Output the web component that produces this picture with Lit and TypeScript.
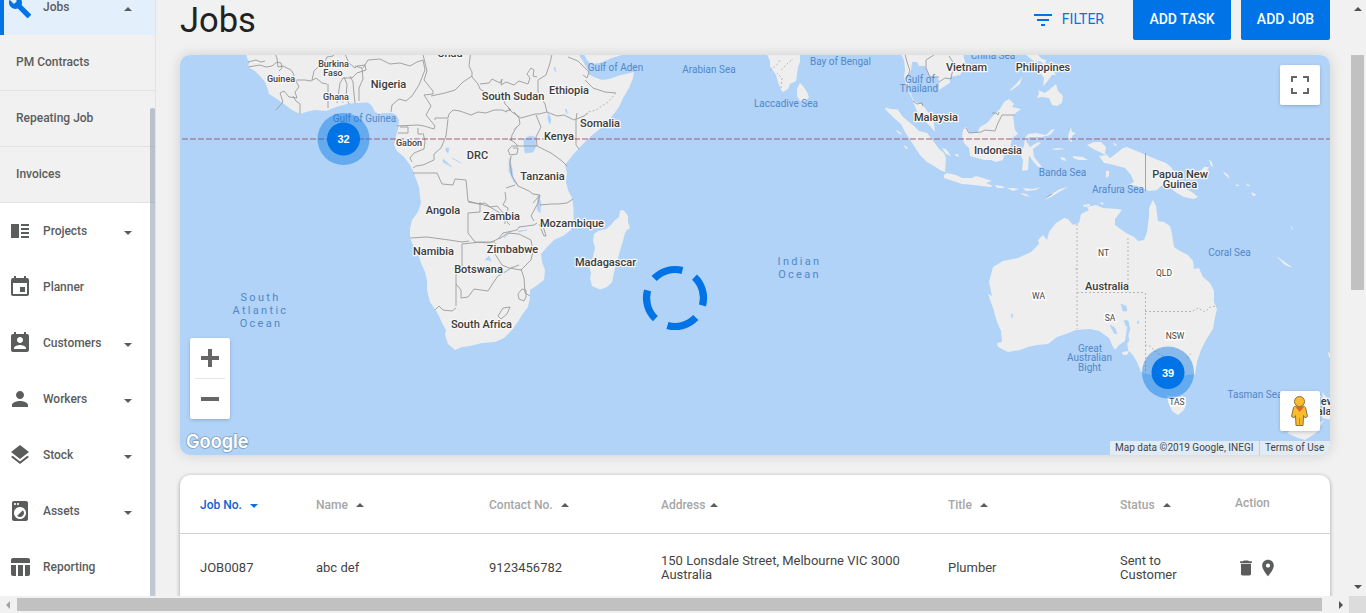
import { LitElement, html, svg, css } from "lit";
import { customElement } from "lit/decorators.js";

const ICONS: Record<string, string> = {
  jobs: "M22.7 19l-9.1-9.1c.9-2.3.4-5-1.5-6.9-2-2-5-2.4-7.4-1.3L9 6 6 9 1.6 4.7C.4 7.1.9 10.1 2.9 12.1c1.9 1.9 4.6 2.4 6.9 1.5l9.1 9.1c.4.4 1 .4 1.4 0l2.3-2.3c.5-.4.5-1.1.1-1.4z",
  projects: "M3 5h8v14H3zM13 5h8v2h-8zM13 9h8v2h-8zM13 13h8v2h-8zM13 17h8v2h-8z",
  planner: "M17 12h-5v5h5v-5zM16 1v2H8V1H6v2H5c-1.11 0-1.99.9-1.99 2L3 19c0 1.1.89 2 2 2h14c1.1 0 2-.9 2-2V5c0-1.1-.9-2-2-2h-1V1h-2zm3 18H5V8h14v11z",
  customers: "M19 3h-1V1h-2v2H8V1H6v2H5c-1.11 0-2 .9-2 2v14c0 1.1.89 2 2 2h14c1.1 0 2-.9 2-2V5c0-1.1-.9-2-2-2zm-7 3c1.66 0 3 1.34 3 3s-1.34 3-3 3-3-1.34-3-3 1.34-3 3-3zm6 12H6v-1c0-2 4-3.1 6-3.1s6 1.1 6 3.1v1z",
  workers: "M12 12c2.21 0 4-1.79 4-4s-1.79-4-4-4-4 1.79-4 4 1.79 4 4 4zm0 2c-2.67 0-8 1.34-8 4v2h16v-2c0-2.66-5.33-4-8-4z",
  stock: "M11.99 18.54l-7.37-5.73L3 14.07l9 7 9-7-1.63-1.27-7.38 5.74zM12 16l7.36-5.73L21 9l-9-7-9 7 1.63 1.27L12 16z",
  assets: "M9.17 16.83c1.56 1.56 4.1 1.56 5.66 0 1.56-1.56 1.56-4.1 0-5.66l-5.66 5.66zM18 2.01L6 2c-1.11 0-2 .89-2 2v16c0 1.11.89 2 2 2h12c1.11 0 2-.89 2-2V4c0-1.11-.89-1.99-2-1.99zM10 4c.55 0 1 .45 1 1s-.45 1-1 1-1-.45-1-1 .45-1 1-1zM7 4c.55 0 1 .45 1 1s-.45 1-1 1-1-.45-1-1 .45-1 1-1zm5 16c-3.31 0-6-2.69-6-6s2.69-6 6-6 6 2.69 6 6-2.69 6-6 6z",
  reporting: "M10 10.02h5V21h-5zM17 21h3c1.1 0 2-.9 2-2v-9h-5v11zm3-18H5c-1.1 0-2 .9-2 2v3h19V5c0-1.1-.9-2-2-2zM3 19c0 1.1.9 2 2 2h3V10H3v9z",
  filter: "M10 18h4v-2h-4v2zM3 6v2h18V6H3zm3 7h12v-2H6v2z",
  trash: "M6 19c0 1.1.9 2 2 2h8c1.100 0 2-.9 2-2V7H6v12zM19 4h-3.500l-1-1h-5l-1 1H5v2h14V4z",
  place: "M12 2C8.130 2 5 5.130 5 9c0 5.250 7 13 7 13s7-7.750 7-13c0-3.870-3.130-7-7-7zm0 9.500c-1.380 0-2.500-1.120-2.500-2.500s1.120-2.500 2.500-2.500 2.500 1.120 2.500 2.500-1.120 2.500-2.500 2.500z",
};

const icon = (name: string, cls = "icon") =>
  html`<svg class=${cls} viewBox="0 0 24 24"><path d=${ICONS[name]}></path></svg>`;

/* Land outlines, in the coordinate space of the map view box. */
const LAND: string[] = [
  // Africa
  "M246 50L247 58 249 62 248 67 255 71 260 76 265 82 268 90 269 94 277 99 284 104 292 110 300 114 306 112 315 110 326 111 336 107 347 104 355 103 368 102.500 372 106 375 112 379 114 384 113 392 113 396 115 399 120 398 129 396 136 394 145 397 151 404 157 410 165 414 173 416 179 419 187 420 196 421 203 418 212 412 220 410 229 410 238 415 250 419 256 421 263 425 272 427 281 427 290 430 302 434 308 438 314 443 325 446 330 445 335 448 344 455 350 462 347 470 346 482 343 495 342 504 338 512 330 517 323 524 312 528 307 530 298 530 290 536 286 544 280 545 270 542 262 541 254 548 246 554 240 563 236 571 230 573.500 222 573.500 208 572 198 568 190 566 182 567 173 565 165 572 156 579 148 590 137 601 128 613 115 619 107 623 98 629 88 633 78 634 72 626 74 621 75 609 79 602 80 594 77 588 74 588 70 584 63 576 50Z",
  "M582 50L587 60 591 64 600 63 612 58 622 55 627 50Z",
  "M623 210L626 213 628 216 628 222 630 228 627 230 625 233 623 241 621 247 618 258 615 268 612 282 607 287 600 289.500 592 286 590 278 591 273 589 266 593 257 595 248 593 241 594 234 598 231 606 229 611 225 614 221 619 217 620 211Z",
  // India, Sri Lanka
  "M765 50L770 61 770 66 776 75 778 82 781 90 783 92 788 89 790 84 796 81 797 75 798 67 800 62 800 50Z",
  "M800 83L803 86 807 92 809 97 806 101 800 101 797 96 797 89Z",
  // Indochina and the Malay peninsula
  "M899 50L904 60 905 70 904 77 906 85 908 91 912 98 914 104 917 111 921 117 930 126 935 132 934 123 931 116 925 108 921 104 914 101 911 94 907 88 909 84 907 78 911 71 912 62 917 62 919 66 925 66 930 76 937 77 939 80 939 90 945 86 950 83 950 77 960 75 965 68 965 62 962 50Z",
  // Sumatra, Java
  "M885 107.500L891 109 898 109.500 902 116 909 122 914 126 919 131 927 133 930 137 934 142 939 149 944 153 946 158 945 172 940 170 934 166 927 162 920 155 914 146 909 138 905 132 901 124 894 118 886 110Z",
  "M944 175L947 173 956 175 962 178 972 178 976 176 983 178 992 181 986 183 993 186 990 187 974 185 962 184 953 181 944 178Z",
  "M995 185l7 1 3 2-8 0zM1007 188l6 0 6 1-6 2zM1020 193l6 1 4 3-7-2zM1023 188l9 1 6-1 4-2-6 4-10 1zM1045 200l5-5 10-6 8-2-9 5-8 5-6 3z",
  "M896 130l4 2 2 3-4-2zM904 145l3 2 1 2-3-1zM942 148l4 1 3 4 2 3-5-2zM955 154l3 0 1 3-3-1z",
  // Borneo, Sulawesi
  "M963 130L966 127 970 133 977 133 980 127 987 123 992 117 1000 109 1004 102 1009 99 1014 104 1012 107 1021 109 1013 115 1014 123 1015 130 1018 134 1012 138 1010 149 1004 155 1003 160 996 162 991 160 984 160 970 156 969 148 964 143 962 136Z",
  "M1024 146L1025 138 1028 134 1036 133 1046 135 1051 130 1055 129 1050 135 1042 137 1029 137 1026 141 1030 147 1038 142 1041 143 1033 149 1034 157 1042 167 1038 167 1032 160 1029 155 1028 170 1022 171 1023 160 1020 154Z",
  // Philippines
  "M1020 84L1012 90 1009 91 1018 82 1022 77Z",
  "M1026 55l12 0 4 4 4 1-1 5-5-4-5 1-4-3zM1040 66l5 3 8 1 3 5-4 0-6 8-3 3 1-8-4-5zM1038 90l7 3 4-3 7-6 2 7 5 5-1 7-5 3-5-1-3-7-7-1-5 1 2-5z",
  // Moluccas
  "M1068 136l3-9 1 5 4 1-4 3 0 6-2-1zM1051 149l8-1 6 1-9 1zM1073 156l10 1 5 3-9 0-6-2zM1060 157l5 1 1 3-4-1zM1106 171l3 0 0 5-3 2zM1113 142l4 3-2 1z",
  // New Guinea and the islands to its east
  "M1087 145L1094 142 1101 142 1106 147 1105 153 1110 158 1113 156 1118 152 1123 148 1127 147 1134 150 1144 154 1158 160 1166 163 1172 168 1174 174 1178 180 1184 188 1192 192 1198 197 1194 199 1184 197 1175 192 1169 186 1162 185 1157 190 1149 191 1137 186 1128 185 1134 182 1131 175 1125 168 1110 164 1104 163 1099 156 1106 155 1093 149Z",
  "M1190 176l9-3 5-6 5 0-3 6-10 6-6 1zM1208 159l4 3 1 5-2-1-1-4zM1223 171l5 4 2 4-5-4zM1236 184l4 2-4 0zM1245 183l6 3-3 0zM1251 192l6 3-4 1zM1257 187l4 5zM1262 198l3 3zM1291 225l2 5-2-2zM1295 231l2 3zM1276 256l6 4 11 8-8-3z",
  // Australia
  "M1153 200L1156 206 1157 214 1158 221 1164 222 1170 226 1172 234 1174 247 1180 251 1188 255 1193 261 1194 269 1199 268 1203 277 1210 283 1214 291 1214 302 1217 309 1215 317 1213 329 1206 340 1201 350 1197 362 1195 374 1187 375 1180 377 1172 376 1164 376 1158 378 1151 375 1141 372 1137 362 1133 355 1128 350 1127 341 1129 331 1125 341 1119 345 1115 350 1112 345 1109 338 1099 331 1090 329 1076 330 1066 334 1057 337 1048 344 1037 345 1028 347 1020 350 1008 352 998 347 997 343 1002 342 1001 331 997 322 993 308 988 294 992 296 989 282 993 267 1003 261 1018 258 1031 252 1039 244 1038 240 1043 235 1047 240 1049 232 1056 223 1064 218 1068 219 1073 225 1079 223 1081 214 1089 210 1087 207 1096 205 1103 208 1118 209 1122 210 1115 219 1115 225 1126 233 1134 237 1138 241 1144 240 1147 232 1149 216 1149 208Z",
  "M1083 205l7-1 0 2-6 1zM1100 202l4 1-2 2zM1122 352l7-1-2 4-4 0z",
  // Tasmania, New Zealand
  "M1167 395L1173 398 1186 397 1186 405 1184 410 1178 415 1172 411 1168 402Z",
  "M1322 392L1328 399 1332 405 1332 420 1322 418 1324 408ZM1287 433L1294 428 1312 426 1324 420 1316 433 1305 440 1298 438Z",
  "M1328 352l3 2 0 4-2-1z",
];

const BORDERS: string[] = [
  // West Africa
  "M248 62l8-2 5 2 4-1M248 67l12-2 6 2 6-1 5-4 4 1 1 5-3 3",
  "M273 50l4 8 1 9 5-1 8 4 2 3 4 10 2 4-4 5 2 6-8-1-5-6-4 2 3 9-7 8M293 96l3 5 4 3 0 10M297 80l8 0 6 1 5-3 6 5 5 1",
  "M312 80l2-9 7-7 4-2 2-5 6-1 4-4 8 2 4 9 6 5 2-2 8-1 1 5-9 3-5 5-5 0-4 0-3 5-3 20M328 84l0 14 0 10M344 77l3 7-1 13 3 7M350 76l3 6 1 12 1 9M359 101l0-13 4-9-1-11-7-2M363 68l5-8 12-1 10 5 10-1 10 3 7-4 6-2",
  // Nigeria, Cameroon, Chad
  "M423 60l2 10-6 15-7 11-6 5-7-2-7 6-1 7M422 50l3 13 2 8-3 9 9 11 0 3-9 1 4 6 3 5-5 9 9 11-1 3-10-3-6-1-21 1M400 127l8 0 0 6-10 0M418 128l0 6 4 0",
  "M471 50l-1 8-1 8 3 6 0 5 6 7 2 5 8 5 4 5M431 96l14-3 10-3 8-8 9-6M435 120l0-2 13 0 1-4 4-4 7 1 11 4 7-3 8 1 8-3 8 0 5 2",
  "M480 84l9-1 3-4 8 4 2-4M502 79l-1 6 5-3 8 3 5-4 9 3 2-6-3-4 4-6 3 2-1 6 4 1M506 111l5-1-6-6-2-7-5-5",
  // Horn of Africa and the great lakes
  "M553 50l-3 13-4 12-8 5 0 12 7 12 2 8-8 2-4 0-14 4-9-6-4-4M547 112l10 4 7-1 10 5 10-4 4-3M577 113l-1 7 0 25 3 4M568 57l10 4 7 7 4 4-2 6-4-3M585 80l8 8 12 4 11 1",
  "M536 115l5 12-5 10 1 8 0 1 14 7 11 8 5 5M514 112l5 6 1 6-4 4-4 7-1 6M511 146l26 0M511 147l-3 3 2 5 7-1 1-6-5 0M511 156l-1 8 2 12 6 10 11 5M509 139l5 3 4 4",
  "M448 119l-2 17-5 12-7 6 0 6-11 5-7 1-3 2M423 133l2 8-1 8-10 4-4 5 2 4M413 173l24 0 5 11 11 1 2-6 11 1 2 21 11 3 6-1 5 4 7-1 9 10 5 2",
  "M529 191l4 3 7 1-2 8-7 13 3 5M506 188l9-3M505 192l1 7-3 6 5 3-1 8 0 6 3 3M540 195l-7 8M540 205l11-1 7 0 9-1 6-4",
  // Southern Africa
  "M410 238l17-1 22 3 13 2 7-1M480 202l0 10-12 1 0 20 7 9 14 1 9-4 5-6 14-3 2-3 15-2 3-2M462 244l19-2 14 0M462 244l0 22-6 0 0 40M435 310l4-4 4 4 9 1 4-3M456 284l5 6 0 8 7-1 6-8 14 2 5-8 5-7 7-4 6-4 8-3",
  "M496 243l-2 4 1 7 7 11 7 3 12 2 4-4 6-6 2-9-2-11-12-6-11-1-9 6M521 269l3 9 1 15 5 3M522 289l-4 5 1 5 5 2 2-4 0-7zM503 308l7-1-3 7-6 5-3-3zM468 202l12 2 8 2 7 4 10 6 0 8M539 224l5 12 2 0-3-10",
  // Asia
  "M904 50l3 12 3 9-4 8M926 68l0-8 8-5M926 68l4 9 9 0M939 82l6-4 6 1 1-6 4-6-7-11M913 101l4 3 5-1 1 3M966 128l3 5 12-1 4-2 10 1 3-8 4-8 12 0M992 113l4 0 2 2 1-3M1047 197l5-3",
];
const DASHES: string[] = [
  "M1077 224L1077 329M1128 238L1128 292M1077 292.500L1145 292.500M1145.500 293L1145.500 373M1145 311.500L1192 311.500 1198 308 1205 312 1210 307 1217 306",
  "M1145 345l5 1 7 7 10 5M1187 358l5-6M616 93l-8 9-12 8-8 2M770 70l6-4 4-6M781 88l1-10-5-5M781 70l7-7 5-4M1047 197l7-4",
];
const LAKES: string[] = [
  "M524 139l6-3 5 1 1 9-3 6-8 1-1-8zM509 158l3 10 1 10 5 7-4-3-5-11zM515 128l4-3-6 5zM446 148l3 0-1 5-2-2zM538 195l3 8-1 10-3-4zM505 236l6-4-7 6zM518 231l9-1-8 2zM548 113l3 6-1 5-2-4zM485 260l4-4 2 5-3-1zM443 159l9 8-9-5zM567 110l0 4-2-5zM452 158l9 5zM555 67l1 5-2-3zM341 98l3 2-1 3-2-3z",
  "M1121 304l5 2 1 5-4 0zM1124 320l4 1 0 5-2 0zM1110 325l5 3 2 6-3-1zM1128 321l2 8-2 6 1 6-4 3 2-14zM1111 314l0 4-1 0zM1011 314l2 1-1 3zM1137 322l2-1-1 3zM1075 269l3-1-2 2z",
];

type Label = [string, number, number, number];
const COUNTRY: Label[] = [
  ["Chad", 450, 57, 11], ["Nigeria", 388.5, 88, 11], ["South Sudan", 513, 100, 11], ["Ethiopia", 569, 94, 11],
  ["Somalia", 600, 127, 11], ["Kenya", 559, 140, 11], ["DRC", 477.5, 159, 11], ["Tanzania", 542.5, 180, 11],
  ["Angola", 443, 214, 11], ["Zambia", 501.5, 220, 11], ["Mozambique", 572, 227, 11], ["Namibia", 433.5, 255, 11],
  ["Zimbabwe", 512.5, 253, 11], ["Botswana", 478.5, 273, 11], ["Madagascar", 605.5, 266, 11], ["South Africa", 481.5, 328, 11],
  ["Vietnam", 966.5, 71, 11], ["Philippines", 1043, 71, 11], ["Malaysia", 936, 121, 11], ["Indonesia", 998, 154, 11],
  ["Papua New", 1180, 178, 11], ["Guinea", 1180, 188, 11], ["Australia", 1107, 290, 11],
  ["New", 1324, 405, 11], ["Zealand", 1324, 415, 11],
];
const SMALL: Label[] = [
  ["Guinea", 281, 82, 9], ["Burkina", 333.5, 67, 9], ["Faso", 333, 76, 9], ["Ghana", 336, 100, 9], ["Gabon", 409, 146, 9],
];
const STATE: Label[] = [
  ["NT", 1103.5, 256, 8.5], ["QLD", 1164, 276, 8.5], ["WA", 1038.5, 299, 8.5], ["SA", 1110, 321, 8.5],
  ["NSW", 1175, 339, 8.5], ["TAS", 1177, 405, 8.5],
];
const SEA: Label[] = [
  ["Gulf of Guinea", 364.500, 121.500, 10], ["Gulf of Aden", 615.500, 70.500, 10], ["Arabian Sea", 709, 72.500, 10],
  ["Laccadive Sea", 786, 106.500, 10], ["Bay of Bengal", 840.500, 64.500, 10], ["China Sea", 993, 59, 10],
  ["Gulf of", 920, 82.500, 10], ["Thailand", 919, 91.500, 10], ["Banda Sea", 1062.500, 175.500, 10],
  ["Arafura Sea", 1118, 192.500, 10], ["Coral Sea", 1229.500, 255.500, 10], ["Great", 1090, 351.500, 10],
  ["Australian", 1089.500, 360.500, 10], ["Bight", 1089.500, 370.500, 10], ["Tasman Sea", 1255, 397.500, 10],
];
const OCEAN: Label[] = [
  ["South", 260.500, 301, 11], ["Atlantic", 260.500, 314, 11], ["Ocean", 261, 327, 11],
  ["Indian", 799.500, 265, 11], ["Ocean", 799.500, 278, 11],
];
const labels = (list: Label[], cls: string) =>
  list.map(([t, x, y, s]) => svg`<text class=${cls} x=${x} y=${y} font-size=${s}>${t}</text>`);

const cluster = (x: number, y: number, n: string) => svg`
  <circle cx=${x} cy=${y} r="26" fill="#0073e6" fill-opacity=".43"></circle>
  <circle cx=${x} cy=${y} r="16.5" fill="#0073e6"></circle>
  <text class="count" x=${x} y=${y + 4}>${n}</text>`;

@customElement("side-nav")
class SideNav extends LitElement {
  static styles = css`
    :host { display: block; position: relative; width: 155px; height: 596px; overflow: hidden; background: #fff;
      border-right: 1px solid #e0e2e4; font: 500 12px Roboto, sans-serif; color: #5b5d5c; }
    .list { margin-top: -21px; }
    .item { height: 56px; box-sizing: border-box; display: flex; align-items: center; padding-left: 8px; }
    .icon { width: 24px; height: 24px; fill: #5b5d5c; margin-right: 11px; flex: none; }
    .label { width: 81px; letter-spacing: -.03px; }
    .caret { border: 4.5px solid transparent; border-bottom: 0; border-top-color: #5b5d5c; margin-top: 3px; }
    .active { background: #e4effc; border-left: 4px solid #0073e6; padding-left: 4px; }
    .active .icon { fill: #0073e6; }
    .active .caret { border: 4.5px solid transparent; border-top: 0; border-bottom-color: #5b5d5c; margin-top: 3px; }
    .sub { height: 56px; box-sizing: border-box; display: flex; align-items: center; padding: 0 0 2px 16px;
      background: #f1f1f1; border-bottom: 1px solid #e0e2e4; }
    .thumb { position: absolute; right: 0; top: 108px; width: 5px; height: 490px; border-radius: 2px;
      background: rgba(130, 145, 168, .5); }
  `;
  private items: [string, string, boolean][] = [
    ["projects", "Projects", true], ["planner", "Planner", false], ["customers", "Customers", true],
    ["workers", "Workers", true], ["stock", "Stock", true], ["assets", "Assets", true], ["reporting", "Reporting", false],
  ];
  render() {
    return html`
      <div class="list">
        <div class="item active">${icon("jobs")}<span class="label">Jobs</span><i class="caret"></i></div>
        ${["PM Contracts", "Repeating Job", "Invoices"].map((t) => html`<div class="sub">${t}</div>`)}
        ${this.items.map(([i, t, more]) => html`
          <div class="item">${icon(i)}<span class="label">${t}</span>${more ? html`<i class="caret"></i>` : ""}</div>`)}
      </div>
      <div class="thumb"></div>`;
  }
}

@customElement("job-map")
class JobMap extends LitElement {
  static styles = css`
    :host { display: block; position: relative; height: 400px; border-radius: 10px; overflow: hidden;
      background: #b0d3f7; font-family: Roboto, sans-serif; }
    .canvas { display: block; width: 1150px; height: 400px; }
    text { text-anchor: middle; paint-order: stroke; stroke-linejoin: round; }
    .land { fill: #eeeeee; }
    .lake { fill: #b0d3f7; stroke: #b0d3f7; stroke-width: .6; }
    .border { fill: none; stroke: #9b9b9b; stroke-width: .9; }
    .dash { fill: none; stroke: #b8b8b8; stroke-width: 1; stroke-dasharray: 2 2; }
    .country { font-weight: 500; fill: #3c3c3c; stroke: #f7f7f7; stroke-width: 2.5px; }
    .small { font-weight: 500; fill: #444; stroke: #f7f7f7; stroke-width: 2.5px; }
    .state { fill: #444; stroke: #fff; stroke-width: 3px; }
    .sea { fill: #5387c9; }
    .ocean { fill: #5387c9; letter-spacing: 2.3px; }
    .count { font: bold 11px "Liberation Sans", Arial, sans-serif; fill: #fff; }
    .logo { font: 600 19px Inter, sans-serif; fill: #fff; stroke: #7f9dbd; stroke-width: 1.6px; text-anchor: start; }
    .tool { position: absolute; display: grid; place-items: center; width: 40px; height: 40px; background: #fff;
      border-radius: 2px; box-shadow: 0 1px 4px -1px rgba(0, 0, 0, .3); }
    .full { right: 10px; top: 10px; }
    .man { right: 10px; bottom: 24px; }
    .zoom { left: 10px; top: 283px; height: 81px; }
    .legal { position: absolute; right: 0; bottom: 0; display: flex; gap: 1px; font-size: 10px; line-height: 14px;
      color: #444; }
    .legal span { background: rgba(245, 245, 245, .7); height: 14px; white-space: nowrap; box-sizing: border-box; }
    .data { width: 149px; padding-left: 5px; }
    .terms { width: 70px; padding-left: 5px; }
  `;
  render() {
    return html`
      <svg class="canvas" viewBox="180 55 1150 400">
        ${LAND.map((d) => svg`<path class="land" d=${d}></path>`)}
        ${LAKES.map((d) => svg`<path class="lake" d=${d}></path>`)}
        ${BORDERS.map((d) => svg`<path class="border" d=${d}></path>`)}
        <path class="border" d="M1145.500 153V191"></path>
        ${DASHES.map((d) => svg`<path class="dash" d=${d}></path>`)}
        <path d="M182 139H1330" stroke="#a0566e" stroke-opacity=".47" stroke-width="2" stroke-dasharray="6 2"></path>
        ${labels(SEA, "sea")}${labels(OCEAN, "ocean")}${labels(STATE, "state")}${labels(SMALL, "small")}${labels(COUNTRY, "country")}
        ${cluster(343.5, 139, "32")}${cluster(1168, 372.5, "39")}
        <circle cx="675" cy="298" r="28.500" fill="none" stroke="#0073e6" stroke-width="7.200"
          stroke-dasharray="30.800 13.970" transform="rotate(223 675 298)"></circle>
        <text class="logo" x="186" y="447.500" textLength="62.500" lengthAdjust="spacingAndGlyphs">Google</text>
      </svg>
      <div class="tool full">
        <svg width="18" height="18" viewBox="0 0 18 18"><path fill="#666" d="M0 0v6h2V2h4V0zM16 0h-4v2h4v4h2V0zM16 16h-4v2h6v-6h-2zM2 12H0v6h6v-2H2z"></path></svg>
      </div>
      <div class="tool zoom">
        <svg width="40" height="81" viewBox="0 0 40 81"><path fill="#666" d="M11 18h7v-7h4v7h7v4h-7v7h-4v-7h-7zM11 59h18v4H11z"></path><path fill="#e6e6e6" d="M5 40h30v1H5z"></path></svg>
      </div>
      <div class="tool man">
        <svg width="40" height="40" viewBox="0 0 40 40">
          <path d="M13.500 16.500q.7-1.300 2.500-1.500h7q1.800.2 2.500 1.500l2 9-2.500 1.300-1.500-2.300-.5 10h-7l-.5-10-1.500 2.300-2.500-1.300z" fill="#fbbc2b" stroke="#8a7040" stroke-width="1"></path>
          <path d="M15.500 16l4.200 5 4.300-5z" fill="#e0642f"></path>
          <path d="M19.600 27v8" stroke="#b98723" stroke-width="1"></path>
          <circle cx="19.500" cy="10.500" r="5" fill="#fbbc2b" stroke="#8a7040" stroke-width="1"></circle>
        </svg>
      </div>
      <div class="legal"><span class="data">Map data ©2019 Google, INEGI</span><span class="terms">Terms of Use</span></div>`;
  }
}

@customElement("job-table")
class JobTable extends LitElement {
  static styles = css`
    :host { display: block; height: 150px; background: #fff; border-radius: 10px; font-family: Roboto, sans-serif;
      box-shadow: 0 1px 4px rgba(0, 0, 0, .35); }
    .row { display: grid; grid-template-columns: 116px 173px 172px 287px 172px 115px 1fr; padding-left: 20px;
      align-items: center; }
    .head { height: 58px; font-size: 12px; font-weight: 500; color: #a6a6a6; border-bottom: 1px solid #d0d0d0; }
    .head div { display: flex; align-items: center; gap: 8px; padding-top: 2px; }
    .head .near { gap: 5px; }
    .head .mid { gap: 8px; }
    .head .action { padding: 0 0 3px; }
    .head .sorted { color: #0d62d9; }
    .up { border: 4.5px solid transparent; border-top: 0; border-bottom-color: #5b5d5c; }
    .down { border: 4.5px solid transparent; border-bottom: 0; border-top-color: #0073e6; margin-top: 1px; }
    .body { height: 66px; padding-top: 2px; font-size: 13px; line-height: 14px; color: #444; box-sizing: border-box; }
    .acts { display: flex; gap: 2px; padding-left: 1px; }
    .glyph { width: 20px; height: 20px; fill: #5b5d5c; }
  `;
  render() {
    return html`
      <div class="row head">
        <div class="sorted">Job No.<i class="down"></i></div>
        <div>Name<i class="up"></i></div>
        <div>Contact No.<i class="up"></i></div>
        <div class="near">Address<i class="up"></i></div>
        <div class="mid">Title<i class="up"></i></div>
        <div>Status<i class="up"></i></div>
        <div class="action">Action</div>
      </div>
      <div class="row body">
        <span>JOB0087</span><span>abc def</span><span>9123456782</span>
        <span>150 Lonsdale Street, Melbourne VIC 3000<br />Australia</span>
        <span>Plumber</span><span>Sent to<br />Customer</span>
        <span class="acts">${icon("trash", "glyph")}${icon("place", "glyph")}</span>
      </div>`;
  }
}

@customElement("app-root")
class AppRoot extends LitElement {
  static styles = css`
    :host { display: grid; grid-template: 596px 17px / 1349px 17px; width: 1366px; height: 613px; overflow: hidden;
      background: #f1f1f1; font-family: Roboto, sans-serif; }
    .page { display: grid; grid-template-columns: 156px 1fr; overflow: hidden; }
    .main { padding: 0 19px 0 24px; overflow: hidden; }
    .top { height: 55px; display: flex; align-items: flex-start; }
    h1 { margin: 0; flex: 1; font-size: 34.5px; font-weight: 400; line-height: 40px; color: #222; }
    .filter { display: flex; align-items: center; gap: 7px; height: 37px; margin-right: 29px; font-size: 14px;
      color: #0073e6; }
    .funnel { width: 24px; height: 24px; fill: #0073e6; margin-top: 3px; }
    .btn { margin: -2px 0 0 10px; height: 42px; width: 89px; display: grid; place-items: center; font-size: 14px;
      font-weight: 500; color: #fff; background: #0073e6; border-radius: 2px; }
    .task { width: 98px; margin-left: 0; }
    .shade { border-radius: 10px; box-shadow: 0 0 14px rgba(0, 0, 0, .14); margin-bottom: 20px; }
    .vbar { display: flex; flex-direction: column; align-items: center; background: #f1f1f1; }
    .hbar { display: flex; align-items: center; background: #f1f1f1; }
    .corner { background: #dcdcdc; }
    .vthumb { width: 13px; height: 235px; margin-top: 38px; background: #c1c1c1; }
    .hthumb { width: 1305px; height: 13px; margin-left: 7px; background: #c1c1c1; }
    .a { border: 4px solid transparent; }
    .au { border-top: 0; border-bottom: 4px solid #505050; margin-top: 7px; height: 0; margin-bottom: 6px; }
    .ad { border-bottom: 0; border-top: 4px solid #505050; margin-top: 295px; }
    .al { border-left: 0; border-right: 4px solid #a3a3a3; margin-left: 6px; }
    .ar { border-right: 0; border-left: 4px solid #505050; margin-left: 17px; }
  `;
  render() {
    return html`
      <div class="page">
        <side-nav></side-nav>
        <div class="main">
          <div class="top">
            <h1>Jobs</h1>
            <div class="filter">${icon("filter", "funnel")}FILTER</div>
            <div class="btn task">ADD TASK</div>
            <div class="btn">ADD JOB</div>
          </div>
          <div class="shade"><job-map></job-map></div>
          <job-table></job-table>
        </div>
      </div>
      <div class="vbar"><i class="a au"></i><div class="vthumb"></div><i class="a ad"></i></div>
      <div class="hbar"><i class="a al"></i><div class="hthumb"></div><i class="a ar"></i></div>
      <div class="corner"></div>`;
  }
}
